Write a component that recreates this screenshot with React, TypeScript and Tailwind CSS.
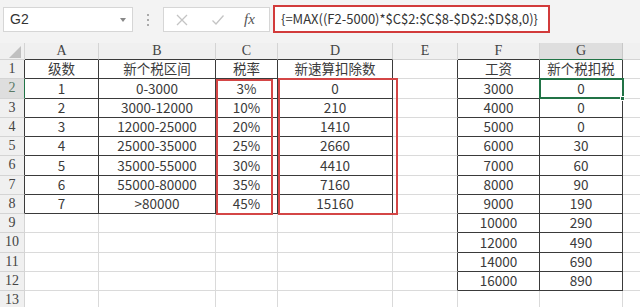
import React from 'react';

const cols = [
    { key: '', w: 25 },
    { key: 'A', w: 74 },
    { key: 'B', w: 117 },
    { key: 'C', w: 62 },
    { key: 'D', w: 115 },
    { key: 'E', w: 65 },
    { key: 'F', w: 82 },
    { key: 'G', w: 83 },
    { key: '', w: 60 },
];

const left = [
    ['级数', '新个税区间', '税率', '新速算扣除数'],
    ['1', '0-3000', '3%', '0'],
    ['2', '3000-12000', '10%', '210'],
    ['3', '12000-25000', '20%', '1410'],
    ['4', '25000-35000', '25%', '2660'],
    ['5', '35000-55000', '30%', '4410'],
    ['6', '55000-80000', '35%', '7160'],
    ['7', '>80000', '45%', '15160'],
];

const right = [
    ['工资', '新个税扣税'],
    ['3000', '0'],
    ['4000', '0'],
    ['5000', '0'],
    ['6000', '30'],
    ['7000', '60'],
    ['8000', '90'],
    ['9000', '190'],
    ['10000', '290'],
    ['12000', '490'],
    ['14000', '690'],
    ['16000', '890'],
];

// is (row, col) inside one of the bordered tables; row 0 = sheet row 1, col 1 = A
function inTable(r: number, c: number) {
    if (r >= 0 && r <= 7 && c >= 1 && c <= 4) return true;
    if (r >= 0 && r <= 11 && c >= 6 && c <= 7) return true;
    return false;
}

function cellText(r: number, c: number) {
    if (c >= 1 && c <= 4 && r <= 7) return left[r][c - 1];
    if (c >= 6 && c <= 7 && r <= 11) return right[r][c - 6];
    return '';
}

export default function App() {
    const rows = Array.from({ length: 13 }, (_, i) => i);

    return (
        <div className="w-[640px] h-[307px] overflow-hidden bg-white font-['Noto_Sans_CJK_SC',sans-serif] text-[#3a3a3a]">
            {/* formula bar */}
            <div className="h-[43px] bg-[#f3f3f3] flex items-start pt-[5px] pl-[3px]">
                <div className="mt-[2px] w-[130px] h-[25px] bg-white border border-[#d6d6d6] flex items-center justify-between pl-[6px] pr-[6px]">
                    <span className="text-[14px] font-['Liberation_Sans',sans-serif] text-[#333]">G2</span>
                    <span className="w-0 h-0 border-l-[3px] border-r-[3px] border-t-[4px] border-l-transparent border-r-transparent border-t-[#888]" />
                </div>
                <div className="w-[30px] h-[29px] flex flex-col items-center justify-center gap-[3px]">
                    <span className="w-[2px] h-[2px] bg-[#aaa]" />
                    <span className="w-[2px] h-[2px] bg-[#aaa]" />
                    <span className="w-[2px] h-[2px] bg-[#aaa]" />
                </div>
                <div className="mt-[2px] w-[107px] h-[25px] bg-white border border-[#d6d6d6] flex items-center">
                    <svg width="14" height="14" viewBox="0 0 14 14" className="ml-[11px]">
                        <path d="M2 2 L12 12 M12 2 L2 12" stroke="#c4c4c4" strokeWidth="1.3" fill="none" />
                    </svg>
                    <svg width="14" height="14" viewBox="0 0 14 14" className="ml-[22px]">
                        <path d="M1.5 7.5 L5 11 L12.5 2.5" stroke="#c4c4c4" strokeWidth="1.3" fill="none" />
                    </svg>
                    <span className="ml-[19px] text-[15px] italic font-['Liberation_Serif',serif] text-[#555]">fx</span>
                </div>
                <div className="ml-[3px] w-[277px] h-[28px] bg-white border-2 border-[#d23b3b] flex items-center pl-[6px]">
                    <span className="text-[13px] text-[#333] whitespace-nowrap">{'{=MAX((F2-5000)*$C$2:$C$8-$D$2:$D$8,0)}'}</span>
                </div>
            </div>

            {/* column headers */}
            <div className="flex h-[17px] bg-[#f0f0f0]">
                {cols.map((c, i) => {
                    const sel = c.key === 'G';
                    const dark = inTable(0, i);
                    return (
                        <div
                            key={i}
                            style={{ width: c.w }}
                            className={
                                'shrink-0 h-full flex items-center justify-center border-r border-b font-[\'Liberation_Serif\',serif] text-[14px] leading-none ' +
                                (sel ? 'bg-[#dedede] text-[#444] border-r-[#c8c8c8] border-b-[#217346]' : 'text-[#444] border-r-[#d4d4d4] ') +
                                (!sel && dark ? 'border-b-[#3a3a3a]' : !sel ? 'border-b-[#d4d4d4]' : '')
                            }
                        >
                            {i === 0 ? (
                                <span className="w-0 h-0 ml-[6px] mt-[1px] border-l-[12px] border-t-[12px] border-l-transparent border-t-transparent border-r-0 border-b-0 relative">
                                    <span className="absolute -left-[12px] -top-[12px] w-0 h-0 border-b-[12px] border-l-[12px] border-b-[#c0c0c0] border-l-transparent" />
                                </span>
                            ) : (
                                c.key
                            )}
                        </div>
                    );
                })}
            </div>

            {/* sheet body */}
            <div className="relative">
                {rows.map((r) => (
                    <div key={r} className="flex h-[19.25px]">
                        {cols.map((c, i) => {
                            if (i === 0) {
                                const sel = r === 1;
                                return (
                                    <div
                                        key={i}
                                        style={{ width: c.w }}
                                        className={
                                            'shrink-0 h-full flex items-center justify-center border-r border-b font-[\'Liberation_Serif\',serif] text-[14px] leading-none ' +
                                            (sel
                                                ? 'bg-[#dedede] text-[#5a7a66] border-r-[#217346] border-b-[#d4d4d4]'
                                                : inTable(r, 1)
                                                ? 'bg-[#f0f0f0] text-[#444] border-r-[#3a3a3a] border-b-[#d4d4d4]'
                                                : 'bg-[#f0f0f0] text-[#444] border-r-[#d4d4d4] border-b-[#d4d4d4]')
                                        }
                                    >
                                        {r + 1}
                                    </div>
                                );
                            }
                            const darkR = inTable(r, i) || inTable(r, i + 1);
                            const darkB = inTable(r, i) || inTable(r + 1, i);
                            return (
                                <div
                                    key={i}
                                    style={{ width: c.w }}
                                    className={
                                        'shrink-0 h-full flex items-center justify-center border-r border-b text-[13.5px] leading-none whitespace-nowrap ' +
                                        (darkR ? 'border-r-[#3a3a3a] ' : 'border-r-[#dadada] ') +
                                        (darkB ? 'border-b-[#3a3a3a]' : 'border-b-[#dadada]')
                                    }
                                >
                                    {cellText(r, i)}
                                </div>
                            );
                        })}
                    </div>
                ))}

                {/* red annotation boxes */}
                <div className="absolute left-[216px] top-[19px] w-[57px] h-[136px] border-2 border-[#d44646]" />
                <div className="absolute left-[278px] top-[18px] w-[120px] h-[137px] border-2 border-[#d44646]" />

                {/* active cell G2 */}
                <div className="absolute left-[539px] top-[18.25px] w-[85px] h-[21px] border-2 border-[#217346]" />
                <div className="absolute left-[620px] top-[36px] w-[5px] h-[5px] bg-[#217346] border border-white" />
            </div>
        </div>
    );
}
